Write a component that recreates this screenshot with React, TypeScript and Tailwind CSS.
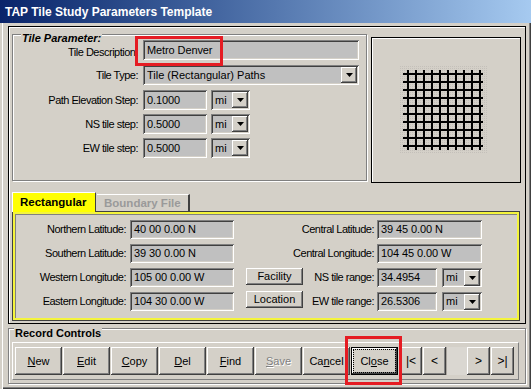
import type { ReactNode } from "react";

// Win2000-style bevels
const sunken =
  "bg-[#c0c0c0] shadow-[inset_1px_1px_0_#808080,inset_-1px_-1px_0_#ffffff,inset_2px_2px_0_#404040,inset_-2px_-2px_0_#d4d0c8]";
const raised =
  "bg-[#d4d0c8] shadow-[inset_-1px_-1px_0_#404040,inset_1px_1px_0_#ffffff,inset_-2px_-2px_0_#808080]";

function Field({ className, children }: { className: string; children?: ReactNode }) {
  return (
    <div
      className={`${sunken} ${className} flex items-center pl-[4px] text-[11px] tracking-[-0.1px] text-black whitespace-nowrap overflow-hidden`}
    >
      {children}
    </div>
  );
}

function Arrow() {
  return (
    <svg width="7" height="4" viewBox="0 0 7 4">
      <path d="M0 0h7L3.5 4z" fill="#000" />
    </svg>
  );
}

function Combo({ className, children }: { className: string; children: ReactNode }) {
  return (
    <div className={`${sunken} ${className} flex items-center pl-[4px] pr-[2px] text-[11px] text-black`}>
      <span className="flex-1 whitespace-nowrap overflow-hidden">{children}</span>
      <div className={`${raised} w-[16px] h-[16px] flex items-center justify-center`}>
        <Arrow />
      </div>
    </div>
  );
}

function Label({ className, children }: { className: string; children: ReactNode }) {
  return (
    <div className={`${className} text-right text-[11px] tracking-[-0.5px] whitespace-nowrap text-black`}>
      {children}
    </div>
  );
}

function Btn({ className, children }: { className: string; children: ReactNode }) {
  return (
    <div className={`${raised} ${className} flex items-center justify-center text-[11px] text-black whitespace-nowrap`}>
      {children}
    </div>
  );
}

function TileGrid() {
  const steps = Array.from({ length: 10 }, (_, i) => 35 + i * 8);
  return (
    <svg width="148" height="144" viewBox="0 0 148 144">
      <defs>
        <pattern id="stip" width="2" height="2" patternUnits="userSpaceOnUse">
          <rect width="2" height="2" fill="#d4d0c8" />
          <rect width="1" height="1" fill="#c4c0ba" />
        </pattern>
      </defs>
      <rect x="28" y="27" width="88" height="88" fill="url(#stip)" />
      {steps.map((p) => (
        <rect key={`v${p}`} x={p} y="32" width="2" height="80" fill="#000" />
      ))}
      {steps.map((p) => (
        <rect key={`h${p}`} x="31" y={p} width="80" height="2" fill="#000" />
      ))}
    </svg>
  );
}

export default function App() {
  return (
    <div className="relative w-[531px] h-[389px] overflow-hidden bg-[#d4d0c8] font-['Liberation_Sans',Arial,sans-serif]">
      {/* title bar */}
      <div className="h-[23px] bg-linear-to-r from-[#0a246a] to-[#a6caf0] flex items-center pl-[5px] text-white text-[12px] font-bold">
        TAP Tile Study Parameters Template
      </div>

      {/* window body */}
      <div className="h-[366px] pt-[3px] shadow-[inset_2px_0_0_#d4d0c8,inset_3px_0_0_#ffffff,inset_-1px_-1px_0_#404040,inset_-2px_-2px_0_#808080]">
        <div className="ml-[8px] w-[518px] h-[298px] border border-black shadow-[inset_1px_1px_0_#ffffff]">
          <div className="flex items-start">
            {/* Tile Parameter group */}
            <div className="relative mt-[7px] ml-[3px] w-[355px] h-[147px] border border-[#808080] shadow-[inset_1px_1px_0_#ffffff,1px_1px_0_#ffffff] pt-[5px]">
              <span className="absolute left-[8px] top-[-2px] bg-[#d4d0c8] px-[1px] text-[11px] leading-[10px] font-bold italic">
                Tile Parameter:
              </span>
              <div className="flex items-start h-[20px]">
                <Label className="w-[125px] mt-[4px] leading-[16px]">Tile Description:</Label>
                <Field className="ml-[5px] w-[216px] h-[20px]">Metro Denver</Field>
              </div>
              <div className="flex items-center h-[20px] mt-[5px]">
                <Label className="w-[125px]">Tile Type:</Label>
                <Combo className="ml-[5px] w-[216px] h-[20px]">Tile (Rectangular) Paths</Combo>
              </div>
              <div className="flex items-center h-[20px] mt-[5px]">
                <Label className="w-[125px]">Path Elevation Step:</Label>
                <Field className="ml-[5px] w-[64px] h-[20px]">0.1000</Field>
                <Combo className="ml-[4px] w-[39px] h-[20px]">mi</Combo>
              </div>
              <div className="flex items-center h-[20px] mt-[4px]">
                <Label className="w-[125px]">NS tile step:</Label>
                <Field className="ml-[5px] w-[64px] h-[20px]">0.5000</Field>
                <Combo className="ml-[4px] w-[39px] h-[20px]">mi</Combo>
              </div>
              <div className="flex items-center h-[20px] mt-[4px]">
                <Label className="w-[125px]">EW tile step:</Label>
                <Field className="ml-[5px] w-[64px] h-[20px]">0.5000</Field>
                <Combo className="ml-[4px] w-[39px] h-[20px]">mi</Combo>
              </div>
            </div>

            {/* tile preview */}
            <div className="mt-[10px] ml-[4px] w-[150px] h-[146px] border border-black shadow-[inset_1px_1px_0_#ffffff]">
              <TileGrid />
            </div>
          </div>

          {/* tabs */}
          <div className="ml-[3px] mt-[9px] w-[508px]">
            <div className="relative z-10 flex items-end h-[20px]">
              <div className="w-[84px] h-[20px] bg-[#ffff00] border-t border-l border-white border-r border-r-[#404040] flex items-center pl-[7px] text-[11.5px] font-bold text-black">
                Rectangular
              </div>
              <div className="ml-[1px] w-[93px] h-[18px] border-t border-white border-r-2 border-r-[#404040] flex items-center pl-[7px] text-[11.5px] font-bold text-[#9a9a9a]">
                Boundary File
              </div>
            </div>
            <div className="ml-[1px] w-[506px] h-[108px] border-2 border-[#f4f43c] shadow-[0_0_0_1px_#404040,inset_1px_1px_0_#808080] pt-[6px] flex flex-col gap-[5px]">
              <div className="flex items-center h-[19px]">
                <Label className="w-[111px]">Northern Latitude:</Label>
                <Field className="ml-[4px] w-[104px] h-[19px]">40 00 0.00 N</Field>
                <Label className="w-[140px]">Central Latitude:</Label>
                <Field className="ml-[3px] w-[105px] h-[19px]">39 45 0.00 N</Field>
              </div>
              <div className="flex items-center h-[19px]">
                <Label className="w-[111px]">Southern Latitude:</Label>
                <Field className="ml-[4px] w-[104px] h-[19px]">39 30 0.00 N</Field>
                <Label className="w-[140px]">Central Longitude:</Label>
                <Field className="ml-[3px] w-[105px] h-[19px]">104 45 0.00 W</Field>
              </div>
              <div className="flex items-center h-[19px]">
                <Label className="w-[111px]">Western Longitude:</Label>
                <Field className="ml-[4px] w-[104px] h-[19px]">105 00 0.00 W</Field>
                <div className="w-[140px] flex items-center">
                  <Btn className="ml-[12px] w-[57px] h-[17px] -mt-[2px]">Facility</Btn>
                  <Label className="flex-1">NS tile range:</Label>
                </div>
                <Field className="ml-[3px] w-[60px] h-[19px]">34.4954</Field>
                <Combo className="ml-[5px] w-[40px] h-[19px]">mi</Combo>
              </div>
              <div className="flex items-center h-[19px]">
                <Label className="w-[111px]">Eastern Longitude:</Label>
                <Field className="ml-[4px] w-[104px] h-[19px]">104 30 0.00 W</Field>
                <div className="w-[140px] flex items-center">
                  <Btn className="ml-[12px] w-[57px] h-[17px] -mt-[4px]">Location</Btn>
                  <Label className="flex-1">EW tile range:</Label>
                </div>
                <Field className="ml-[3px] w-[60px] h-[19px]">26.5306</Field>
                <Combo className="ml-[5px] w-[40px] h-[19px]">mi</Combo>
              </div>
            </div>
          </div>
        </div>

        {/* Record Controls */}
        <div className="relative mt-[4px] ml-[8px] w-[518px] h-[56px] border border-[#808080] shadow-[inset_1px_1px_0_#ffffff,1px_1px_0_#ffffff]">
          <span className="absolute left-[5px] top-[-2px] bg-[#d4d0c8] px-[1px] text-[11px] leading-[12px] font-bold">
            Record Controls
          </span>
          <div className="ml-[3px] mt-[13px] w-[507px] h-[38px] border-t border-l border-white border-r border-b border-r-[#808080] border-b-[#808080] pl-[2px] pt-[4px] flex items-start">
            <Btn className="w-[47px] h-[28px]"><span><u>N</u>ew</span></Btn>
            <Btn className="ml-[1px] w-[47px] h-[28px]"><span><u>E</u>dit</span></Btn>
            <Btn className="ml-[1px] w-[47px] h-[28px]"><span><u>C</u>opy</span></Btn>
            <Btn className="ml-[1px] w-[47px] h-[28px]"><span><u>D</u>el</span></Btn>
            <Btn className="ml-[1px] w-[47px] h-[28px]"><span><u>F</u>ind</span></Btn>
            <Btn className="ml-[1px] w-[47px] h-[28px]">
              <span className="text-[#808080] [text-shadow:1px_1px_0_#ffffff]"><u>S</u>ave</span>
            </Btn>
            <Btn className="ml-[1px] w-[47px] h-[28px]"><span>Ca<u>n</u>cel</span></Btn>
            <div className="ml-[1px] w-[47px] h-[28px] border border-black">
              <Btn className="w-full h-full">
                <span className="px-[6px] py-[3px] border border-dotted border-black">Cl<u>o</u>se</span>
              </Btn>
            </div>
            <Btn className="ml-[2px] w-[22px] h-[28px] text-[12px]">|&lt;</Btn>
            <Btn className="ml-[1px] w-[23px] h-[28px] text-[12px]">&lt;</Btn>
            <div className="w-[21px] h-[28px] bg-[#dad7d1] border-l border-[#a8a49e]" />
            <Btn className="w-[23px] h-[28px] text-[12px]">&gt;</Btn>
            <Btn className="ml-[1px] w-[23px] h-[28px] text-[12px]">&gt;|</Btn>
          </div>
        </div>
      </div>

      {/* red annotation boxes */}
      <div className="absolute left-[135px] top-[36px] w-[88px] h-[30px] border-[3px] border-[#e51c23]" />
      <div className="absolute left-[345px] top-[336px] w-[57px] h-[49px] border-[3px] border-[#e51c23]" />
    </div>
  );
}
